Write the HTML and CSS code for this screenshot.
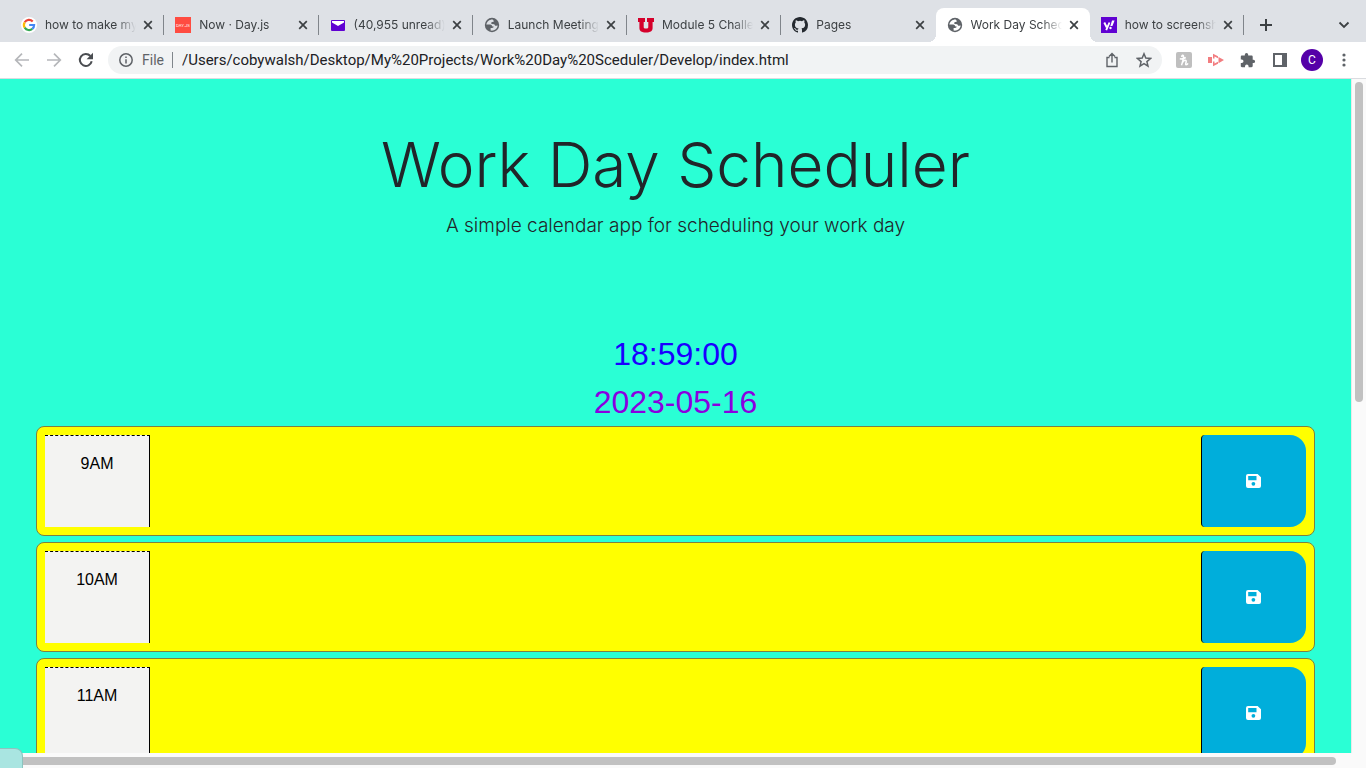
FILE: index.html
```html
<!DOCTYPE html>
<html lang="en">
<head>
<meta charset="utf-8">
<title>Work Day Scheduler</title>
<link rel="stylesheet" href="styles.css">
</head>
<body>
<svg class="defs" aria-hidden="true">
  <symbol id="x" viewBox="0 0 10 10"><path d="M1.2 1.2l7.6 7.6M8.8 1.2L1.2 8.8" fill="none" stroke="#3c4043" stroke-width="1.7"/></symbol>
  <symbol id="globe" viewBox="0 0 16 16"><circle cx="8" cy="8" r="7.2" fill="#5f6368"/><path d="M8.600 2.400C5.400 2.300 2.700 4.600 2.300 7.600L6.200 7.600C7.400 7.700 8 8.300 8 9.300L9.600 9.500C9.700 10.400 9.200 10.900 8 10.900L6.600 10.900L6.600 13.500C10 14.200 13.300 12 13.700 8.600L12 8.800C11 8.800 10.600 8.100 10.300 7.300L7.600 6.900C7 6.200 7.200 5.200 8.100 4.900L9.700 4.800L9.700 3.700Z" fill="currentColor"/></symbol>
  <symbol id="save" viewBox="0 0 15 14"><path fill="#fff" fill-rule="evenodd" d="M2 0h9.600L15 3.200V12a2 2 0 0 1-2 2H2a2 2 0 0 1-2-2V2a2 2 0 0 1 2-2zM2.200 2v4.200h8.300V2zM7.400 7.900a1.900 1.900 0 1 0 0 3.800 1.900 1.900 0 0 0 0-3.800z"/></symbol>
</svg>
<div class="browser">
  <nav class="tabs" aria-label="Tabs">
    <div class="tab">
      <svg class="favicon" viewBox="0 0 16 16"><circle cx="8" cy="8" r="8" fill="#fff"/><g fill="none" stroke-width="2.200"><path d="M3.700 5.300A5.100 5.100 0 0 1 11.700 4.400" stroke="#ea4335"/><path d="M3.700 5.300a5.100 5.100 0 0 0 0 5.400" stroke="#fbbc05"/><path d="M3.700 10.700a5.100 5.100 0 0 0 7.600 1.200" stroke="#34a853"/><path d="M11.300 11.900A5.100 5.100 0 0 0 13.100 8H8.200" stroke="#4285f4"/></g></svg>
      <span class="tab-title">how to make my</span><button class="close" aria-label="Close tab"><svg><use href="#x"/></svg></button>
    </div>
    <div class="tab">
      <svg class="favicon" viewBox="0 0 16 16"><rect width="16" height="16" fill="#ff4c41"/><text x="8" y="10" class="dayjs" text-anchor="middle">DAY.JS</text></svg>
      <span class="tab-title">Now · Day.js</span><button class="close" aria-label="Close tab"><svg><use href="#x"/></svg></button>
    </div>
    <div class="tab">
      <svg class="favicon" viewBox="0 0 16 16"><rect x="1" y="3" width="14" height="11" rx="1" fill="#6001d2"/><path d="M2 4h12v1.500L8 9 2 5.500z" fill="#fff"/></svg>
      <span class="tab-title">(40,955 unread)</span><button class="close" aria-label="Close tab"><svg><use href="#x"/></svg></button>
    </div>
    <div class="tab">
      <svg class="favicon"><use href="#globe"/></svg>
      <span class="tab-title">Launch Meeting</span><button class="close" aria-label="Close tab"><svg><use href="#x"/></svg></button>
    </div>
    <div class="tab">
      <svg class="favicon" viewBox="0 0 16 16"><path d="M0 1h7v4H5.700v5c0 1 .6 1.500 2.300 1.500s2.300-.5 2.300-1.500V5H9V1h7v4h-1.400v6c0 3-2.200 4.500-6.600 4.500S1.400 14 1.400 11V5H0z" fill="#d5002b"/></svg>
      <span class="tab-title">Module 5 Challenge</span><button class="close" aria-label="Close tab"><svg><use href="#x"/></svg></button>
    </div>
    <div class="tab before-active">
      <svg class="favicon" viewBox="0 0 16 16"><path fill="#24292f" d="M8 0C3.580 0 0 3.580 0 8c0 3.540 2.290 6.530 5.470 7.590.4.070.55-.17.55-.38 0-.19-.01-.82-.01-1.490-2.010.37-2.530-.49-2.690-.94-.09-.23-.48-.94-.82-1.130-.28-.15-.68-.52-.01-.53.63-.01 1.080.58 1.230.82.72 1.210 1.870.87 2.330.66.07-.52.28-.87.51-1.070-1.780-.2-3.640-.89-3.640-3.950 0-.87.31-1.590.82-2.150-.08-.2-.36-1.020.08-2.120 0 0 .67-.21 2.200.82a7.500 7.500 0 0 1 4 0c1.530-1.040 2.200-.82 2.200-.82.44 1.100.16 1.920.08 2.120.51.56.82 1.270.82 2.150 0 3.070-1.870 3.750-3.650 3.950.29.25.54.73.54 1.480 0 1.070-.01 1.930-.01 2.200 0 .21.15.46.55.38A8 8 0 0 0 16 8c0-4.420-3.580-8-8-8z"/></svg>
      <span class="tab-title">Pages</span><button class="close" aria-label="Close tab"><svg><use href="#x"/></svg></button>
    </div>
    <div class="tab active">
      <svg class="favicon"><use href="#globe"/></svg>
      <span class="tab-title">Work Day Scheduler</span><button class="close" aria-label="Close tab"><svg><use href="#x"/></svg></button>
    </div>
    <div class="tab">
      <svg class="favicon" viewBox="0 0 16 16"><rect width="16" height="16" fill="#6001d2"/><path d="M3.300 5.500l2.400 4.700M8.500 5.500L5.200 13.200" stroke="#fff" stroke-width="1.900" fill="none"/><path d="M11 3.500h2.600L11.400 9H9.300z" fill="#fff"/><circle cx="9.500" cy="11" r="1.200" fill="#fff"/></svg>
      <span class="tab-title">how to screenshot</span><button class="close" aria-label="Close tab"><svg><use href="#x"/></svg></button>
    </div>
    <div class="strip-end">
      <button class="tool" aria-label="New tab"><svg width="14" height="14" viewBox="0 0 14 14"><path d="M7 1v12M1 7h12" stroke="#3c4043" stroke-width="2"/></svg></button>
      <button class="tool" aria-label="Search tabs"><svg width="12" height="12" viewBox="0 0 12 12"><path d="M1.500 3.500L6 8l4.500-4.500" fill="none" stroke="#3c4043" stroke-width="1.800"/></svg></button>
    </div>
  </nav>

  <div class="toolbar">
    <div class="nav-buttons">
      <button class="tool" aria-label="Back"><svg width="16" height="16" viewBox="0 0 16 16"><path d="M15 8H2M8 1.700L1.700 8 8 14.300" fill="none" stroke="#b5b7ba" stroke-width="1.700"/></svg></button>
      <button class="tool" aria-label="Forward"><svg width="16" height="16" viewBox="0 0 16 16"><path d="M1 8h13M8 1.700L14.300 8 8 14.300" fill="none" stroke="#b5b7ba" stroke-width="1.700"/></svg></button>
      <button class="tool" aria-label="Reload"><svg width="16" height="16" viewBox="0 0 16 16"><path d="M13.700 9.200A6 6 0 1 1 12.400 4" fill="none" stroke="#4a4d51" stroke-width="2"/><path d="M15 .8v6.400H8.600z" fill="#4a4d51"/></svg></button>
    </div>
    <div class="address">
      <svg width="14" height="14" viewBox="0 0 14 14"><circle cx="7" cy="7" r="6.200" fill="none" stroke="#5f6368" stroke-width="1.500"/><path d="M7 6.200v4.300M7 3.400v1.600" stroke="#5f6368" stroke-width="1.500"/></svg>
      <label class="scheme" for="url">File</label>
      <input class="url" id="url" type="text" value="/Users/cobywalsh/Desktop/My%20Projects/Work%20Day%20Sceduler/Develop/index.html">
      <button class="tool" aria-label="Share"><svg width="14" height="16" viewBox="0 0 14 16"><path d="M4.500 5.500H2v9h10v-9H9.500M7 10.500V2M4 4.500l3-3 3 3" fill="none" stroke="#5f6368" stroke-width="1.400"/></svg></button>
      <button class="tool" aria-label="Bookmark"><svg width="16" height="16" viewBox="0 0 16 16"><path d="M8 1.800l1.800 4.300 4.700.4-3.600 3.100 1.100 4.600L8 11.700l-4 2.500 1.100-4.600-3.600-3.100 4.700-.4z" fill="none" stroke="#5f6368" stroke-width="1.500"/></svg></button>
    </div>
    <div class="extensions">
      <button class="tool" aria-label="Honey"><svg width="16" height="16" viewBox="0 0 16 16"><rect width="16" height="16" rx="2" fill="#bfbfbf"/><path d="M5.500 13.200c1-3 2.300-6.500 2-9.200-.2-1.500-1.900-.8-1.700 1M3.800 6.800c2 .4 4-.2 6-1.300M6.300 11c1.300-3 4-3.800 3.900-1.500-.1 1.500-1.200 3.300 0 3.300.7 0 1.400-.6 1.800-1.400" fill="none" stroke="#fff" stroke-width="1.500"/></svg></button>
      <button class="tool" aria-label="Screen recorder"><svg width="16" height="14" viewBox="0 0 16 14"><path d="M0 4h4v6H0zM5 .8l5 2.500v2L6.500 3.600v1.900H5zM10.500 4L16 7l-5.500 3.200zM5 13.200l5-2.500v-2L6.500 10.400V8.500H5z" fill="#f27d80"/></svg></button>
      <button class="tool" aria-label="Extensions"><svg width="16" height="16" viewBox="0 0 16 16"><path d="M6.500 1A1.700 1.700 0 0 1 8.200 2.700V3.500h3.300c.7 0 1.200.5 1.200 1.200v3h.7a1.700 1.700 0 0 1 0 3.400h-.7v3c0 .7-.5 1.200-1.200 1.200H8.600v-.9a1.800 1.800 0 0 0-3.600 0v.9H2c-.7 0-1.200-.5-1.200-1.200v-3h.9a1.800 1.800 0 0 0 0-3.600H.8V4.700c0-.7.5-1.200 1.200-1.200h2.800v-.8A1.700 1.700 0 0 1 6.500 1z" fill="#5f6368"/></svg></button>
      <button class="tool" aria-label="Side panel"><svg width="14" height="14" viewBox="0 0 14 14"><rect x="1" y="1" width="12" height="12" fill="#fff" stroke="#5f6368" stroke-width="2"/><path d="M9 1h4v12H9z" fill="#5f6368"/></svg></button>
      <button class="tool" aria-label="Profile"><span class="avatar">C</span></button>
      <button class="tool" aria-label="Menu"><svg width="4" height="14" viewBox="0 0 4 14"><g fill="#5f6368"><circle cx="2" cy="2" r="1.600"/><circle cx="2" cy="7" r="1.600"/><circle cx="2" cy="12" r="1.600"/></g></svg></button>
    </div>
  </div>

  <div class="viewport">
    <main class="page">
      <header class="intro">
        <h1 class="title">Work Day Scheduler</h1>
        <p class="lead">A simple calendar app for scheduling your work day</p>
      </header>
      <div class="clock">
        <div class="time">18:59:00</div>
        <div class="date">2023-05-16</div>
      </div>
      <div class="schedule">
        <section class="row">
          <label class="hour" for="h9">9AM</label><textarea class="event" id="h9"></textarea>
          <button class="save" aria-label="save"><svg width="15" height="14"><use href="#save"/></svg></button>
        </section>
        <section class="row">
          <label class="hour" for="h10">10AM</label><textarea class="event" id="h10"></textarea>
          <button class="save" aria-label="save"><svg width="15" height="14"><use href="#save"/></svg></button>
        </section>
        <section class="row">
          <label class="hour" for="h11">11AM</label><textarea class="event" id="h11"></textarea>
          <button class="save" aria-label="save"><svg width="15" height="14"><use href="#save"/></svg></button>
        </section>
      </div>
    </main>
    <div class="track-y"><div class="thumb-y"></div></div>
    <div class="track-x"><div class="thumb-x"></div></div>
    <div class="status"></div>
  </div>
</div>
</body>
</html>
```
FILE: styles.css
```css
* { box-sizing: border-box; }
body { margin: 0; font-family: "Liberation Sans", Arial, sans-serif; color: #212529; }
button { border: 0; padding: 0; background: none; font: inherit; cursor: pointer; }
svg { display: block; flex: none; }
.defs { position: absolute; width: 0; height: 0; }

.browser { display: flex; flex-direction: column; height: 100vh; overflow: hidden; }

.tabs {
  display: flex; flex: none; height: 42px; padding: 8px 0 0 10px;
  background: #dee1e6; font-family: Inter, sans-serif; font-size: 12px; color: #3c4043;
}
.tab {
  position: relative; display: flex; flex: 1; align-items: center; min-width: 0;
  padding: 0 10px 0 11px;
}
.tab::after {
  content: ""; position: absolute; right: 0; top: 7px; width: 1px; height: 20px; background: #80858b;
}
.tab.active::after, .tab.before-active::after { display: none; }
.tab.active { background: #fff; border-radius: 8px 8px 0 0; }
.tab.active::before {
  content: ""; position: absolute; left: -8px; right: -8px; bottom: 0; height: 8px;
  background:
    radial-gradient(circle at 0 0, transparent 8px, #fff 8px) left / 8px 8px no-repeat,
    radial-gradient(circle at 100% 0, transparent 8px, #fff 8px) right / 8px 8px no-repeat;
}
.favicon { width: 16px; height: 16px; color: #dee1e6; }
.active .favicon { color: #fff; }
.dayjs { font-size: 4px; fill: #fff; }
.tab-title {
  flex: 1; min-width: 0; margin: 0 6px 0 8px; overflow: hidden; white-space: nowrap; line-height: 18px;
  mask-image: linear-gradient(to left, transparent, #000 20px);
}
.close { display: grid; place-items: center; width: 12px; height: 16px; }
.close svg { width: 10px; height: 10px; }
.strip-end {
  display: flex; flex: none; justify-content: space-between; align-items: center;
  width: 122px; padding: 0 16px 0 15px;
}
.tool { display: grid; place-items: center; flex: none; }

.toolbar {
  display: flex; flex: none; align-items: center; height: 37px;
  background: #fff; border-bottom: 1px solid #dadce0;
  font-family: Roboto, sans-serif; font-size: 14px;
}
.nav-buttons { display: flex; gap: 16px; padding: 0 14px; }
.address {
  display: flex; flex: 1; align-items: center; min-width: 0; height: 28px;
  padding: 0 2px 0 11px; border-radius: 14px; background: #f1f3f4;
}
.scheme {
  margin-left: 9px; padding-right: 8px; border-right: 1px solid #80868b;
  line-height: 16px; color: #5f6368;
}
.url {
  flex: 1; min-width: 0; margin-left: 9px; padding: 0; border: 0; outline: 0;
  background: none; font: inherit; font-size: 15px; color: #202124;
}
.address .tool, .extensions .tool { width: 32px; }
.extensions { display: flex; align-items: center; padding: 0 6px; }
.avatar {
  width: 22px; height: 22px; border-radius: 50%; background: #5500a8; color: #fff;
  font-size: 12px; line-height: 22px;
}

.viewport {
  position: relative; display: grid; flex: 1; min-height: 0;
  grid-template: minmax(0, 1fr) 15px / minmax(0, 1fr) 15px; background: #fafafa;
}
.page { overflow: hidden; background: #2affd5; }
.intro { padding-top: 48px; text-align: center; }
.title { margin: 0 0 8px; font-family: Inter, sans-serif; font-size: 62px; font-weight: 300; line-height: 76px; }
.lead { margin: 0; font-family: Inter, sans-serif; font-size: 19px; font-weight: 300; line-height: 30px; }
.clock { display: grid; gap: 8px; margin: 93px 0 4px; text-align: center; font-size: 32px; line-height: 40px; }
.time { color: #1a00ff; }
.date { color: #8a00e0; }
.schedule { display: grid; gap: 6px; padding: 0 36px; }
.row {
  display: grid; grid-template-columns: 1fr 10fr 1fr; height: 110px; padding: 8px;
  border: 1px solid #7f8040; border-radius: 8px; background: #ff0;
}
.hour {
  padding-top: 16px; border-top: 1px dashed #000; border-right: 1px solid #000;
  background: #f3f3f2; color: #000; font-size: 16px; line-height: 24px; text-align: center;
}
.event { width: 100%; padding: 8px; border: 0; outline: 0; resize: none; background: none; font: inherit; }
.save {
  display: grid; place-items: center; border-left: 1px solid #000;
  border-radius: 4px 16px 16px 4px; background: #00aedb;
}
.track-y { padding: 3px; border-left: 1px solid #e8e8e8; }
.thumb-y { height: 320px; border-radius: 4px; background: #c1c1c1; }
.track-x { grid-column: 1 / -1; padding: 4px 30px 3px 4px; }
.thumb-x { height: 8px; border-radius: 4px; background: #c1c1c1; }
.status {
  position: absolute; left: 0; bottom: 0; width: 23px; height: 20px;
  border: solid #8cc4bf; border-width: 1px 1px 0 0; border-radius: 0 8px 0 0; background: #a9e5e1;
}
```
